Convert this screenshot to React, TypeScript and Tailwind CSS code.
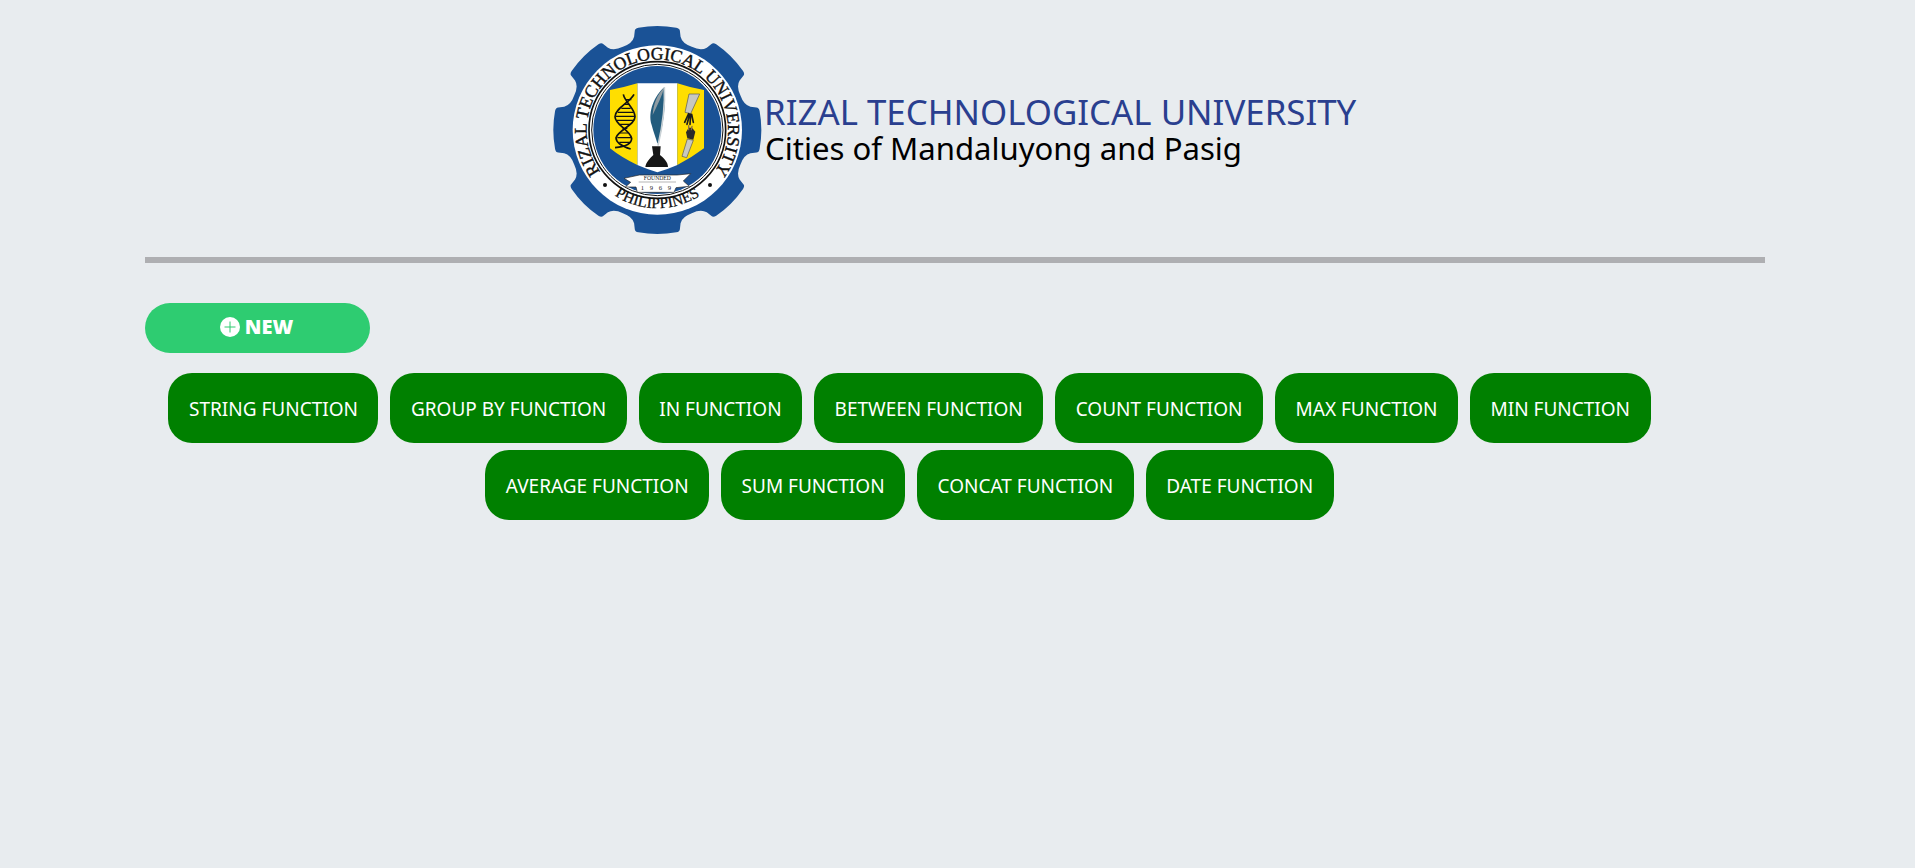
const functions = [
  'STRING FUNCTION',
  'GROUP BY FUNCTION',
  'IN FUNCTION',
  'BETWEEN FUNCTION',
  'COUNT FUNCTION',
  'MAX FUNCTION',
  'MIN FUNCTION',
  'AVERAGE FUNCTION',
  'SUM FUNCTION',
  'CONCAT FUNCTION',
  'DATE FUNCTION',
];

const polar = (deg: number, r: number) => {
  const a = (deg * Math.PI) / 180;
  return `${(352 + r * Math.sin(a)).toFixed(1)} ${(345 - r * Math.cos(a)).toFixed(1)}`;
};

// Eight teeth with small corner radius and shallow valleys
const gearPath = () => {
  let d = `M${polar(-22.5, 270)}`;
  for (let i = 0; i < 8; i++) {
    const t = i * 45;
    d += ` Q${polar(t - 16, 270)} ${polar(t - 14, 288)}`;
    d += ` L${polar(t - 12.8, 305)} Q${polar(t - 12.5, 312)} ${polar(t - 10.5, 312)}`;
    d += ` A312 312 0 0 1 ${polar(t + 10.5, 312)}`;
    d += ` Q${polar(t + 12.5, 312)} ${polar(t + 12.8, 305)} L${polar(t + 14, 288)}`;
    d += ` Q${polar(t + 16, 270)} ${polar(t + 22.5, 270)}`;
  }
  return d + ' Z';
};

// Drawn in the coordinates of a 3x crop, then scaled down to 210px
const Logo = () => (
  <svg viewBox="36 30 630 630" className="w-[210px] h-[210px] shrink-0">
    <defs>
      <path id="arcTop" d="M246 529 A212 212 0 1 1 458 529" />
      <path id="arcBottom" d="M210 532 A236 236 0 0 0 494 532" />
    </defs>

    <path d={gearPath()} fill="#1a5296" />

    {/* Rings */}
    <circle cx="352" cy="345" r="254" fill="#ffffff" />
    <circle cx="352" cy="345" r="205" fill="none" stroke="#111111" strokeWidth="5" />
    <circle cx="352" cy="345" r="197" fill="none" stroke="#111111" strokeWidth="3" />
    <circle cx="352" cy="345" r="192" fill="#1a5296" />

    <text fill="#111111" stroke="#111111" strokeWidth="1.2" fontSize="53" textAnchor="middle" letterSpacing="-0.3" fontFamily="'Liberation Serif', serif">
      <textPath href="#arcTop" startOffset="50%">RIZAL TECHNOLOGICAL UNIVERSITY</textPath>
    </text>
    <text fill="#111111" stroke="#111111" strokeWidth="0.8" fontSize="46" textAnchor="middle" fontFamily="'Liberation Serif', serif">
      <textPath href="#arcBottom" startOffset="50%">PHILIPPINES</textPath>
    </text>
    <circle cx="195" cy="510" r="6" fill="#111111" />
    <circle cx="510" cy="510" r="6" fill="#111111" />

    {/* Shield */}
    <path d="M292 205 L412 205 L412 450 Q385 462 352 472 Q320 462 292 450 Z" fill="#ffffff" />
    <path d="M210 225 Q250 218 292 205 L292 450 Q245 428 210 400 Z" fill="#ffde00" />
    <path d="M412 205 Q450 218 492 225 L492 400 Q455 428 412 450 Z" fill="#ffde00" />

    {/* DNA */}
    <path d="M282 238 C270 262 225 280 225 305 C225 330 270 345 275 370 C275 385 260 395 225 398" fill="none" stroke="#111111" strokeWidth="5" />
    <path d="M250 238 C255 262 285 280 285 305 C285 330 235 345 228 368 C228 385 250 395 272 402" fill="none" stroke="#111111" strokeWidth="5" />
    <path d="M258 254 L274 254 M254 268 L268 268 M244 280 L272 280 M234 292 L280 292 M228 304 L284 304 M230 316 L282 316 M240 328 L270 328 M248 340 L262 340 M240 354 L264 354 M232 368 L274 368 M238 382 L270 382" stroke="#111111" strokeWidth="3.5" />

    {/* Quill */}
    <path d="M373 217 C345 240 322 290 335 330 C340 350 348 370 352 385 L356 385 C364 350 380 280 373 217 Z" fill="#235c7d" />
    <path d="M373 217 C350 240 340 270 338 300 C352 270 366 245 373 217 Z" fill="#8f9ca3" />
    <path d="M373 217 C376 270 366 340 354 392" fill="none" stroke="#c9d1d5" strokeWidth="5" />

    {/* Ink bottle */}
    <path d="M336 394 L362 394 L360 420 C372 430 384 442 384 456 L316 456 C318 442 330 430 340 420 Z" fill="#161616" />

    {/* Scroll and hands */}
    <path d="M447 237 L479 237 L452 296 L435 292 Z" fill="#c8c8c0" stroke="#555555" strokeWidth="2" />
    <path d="M442 372 L460 376 L440 428 L426 424 Z" fill="#c8c8c0" stroke="#555555" strokeWidth="2" />
    <path d="M446 296 L434 322 M449 298 L441 328 M452 298 L450 328 M455 298 L460 322" stroke="#1c1c1c" strokeWidth="5" strokeLinecap="round" />
    <path d="M438 352 L446 338 L456 338 L466 350 L460 374 L442 370 Z" fill="#2a2a2a" />
    <path d="M446 344 L446 332 M454 344 L456 334" stroke="#8a6d4a" strokeWidth="4" strokeLinecap="round" />

    {/* Banner */}
    <path d="M252 490 L298 480 L412 480 L452 476 L430 498 L448 514 L408 518 L402 532 L292 532 L288 516 L256 516 L272 502 Z" fill="#ffffff" stroke="#222222" strokeWidth="2" />
    <path d="M296 501 L408 501" stroke="#222222" strokeWidth="1" />
    <text x="352" y="496" textAnchor="middle" fill="#222222" fontSize="17" fontFamily="'Liberation Serif', serif">
      FOUNDED
    </text>
    <text x="356" y="526" textAnchor="middle" fill="#222222" fontSize="20" letterSpacing="17" fontFamily="'Liberation Serif', serif">
      1969
    </text>
  </svg>
);

const App = () => {
  return (
    <div className="min-h-[868px] bg-[#e8ecef] font-['Noto_Sans',sans-serif] pt-[25px]">
      {/* Header */}
      <div className="flex items-center ml-[552px]">
        <Logo />
        <div className="ml-[2px] -mt-[2px]">
          <div className="text-[34.85px] leading-[37px] text-[#2a3f8f]">RIZAL TECHNOLOGICAL UNIVERSITY</div>
          <div className="text-[31.1px] leading-[36px] pl-[1px] text-black">Cities of Mandaluyong and Pasig</div>
        </div>
      </div>

      <div className="ml-[145px] w-[1620px] h-[6px] bg-[#aeafb2] mt-[22px]" />

      {/* New button */}
      <button className="ml-[145px] mt-[40px] w-[225px] h-[50px] pb-[3px] pr-[2px] rounded-[25px] bg-[#2ecc71] flex items-center justify-center gap-[5px] text-white text-[20px] font-black">
        <svg viewBox="0 0 20 20" className="w-[20px] h-[20px]">
          <circle cx="10" cy="10" r="10" fill="#ffffff" />
          <path d="M10 4.5 V15.5 M4.5 10 H15.5" stroke="#2ecc71" strokeWidth="1" />
        </svg>
        NEW
      </button>

      {/* Function buttons */}
      <div className="ml-[145px] w-[1529px] mt-[20px] flex flex-wrap justify-center gap-x-[12px] gap-y-[7px]">
        {functions.map((name) => (
          <button key={name} className="h-[70px] px-[20.5px] pt-[3px] rounded-[24px] bg-[#008000] text-white text-[19px]">
            {name}
          </button>
        ))}
      </div>
    </div>
  );
};

export default App;
